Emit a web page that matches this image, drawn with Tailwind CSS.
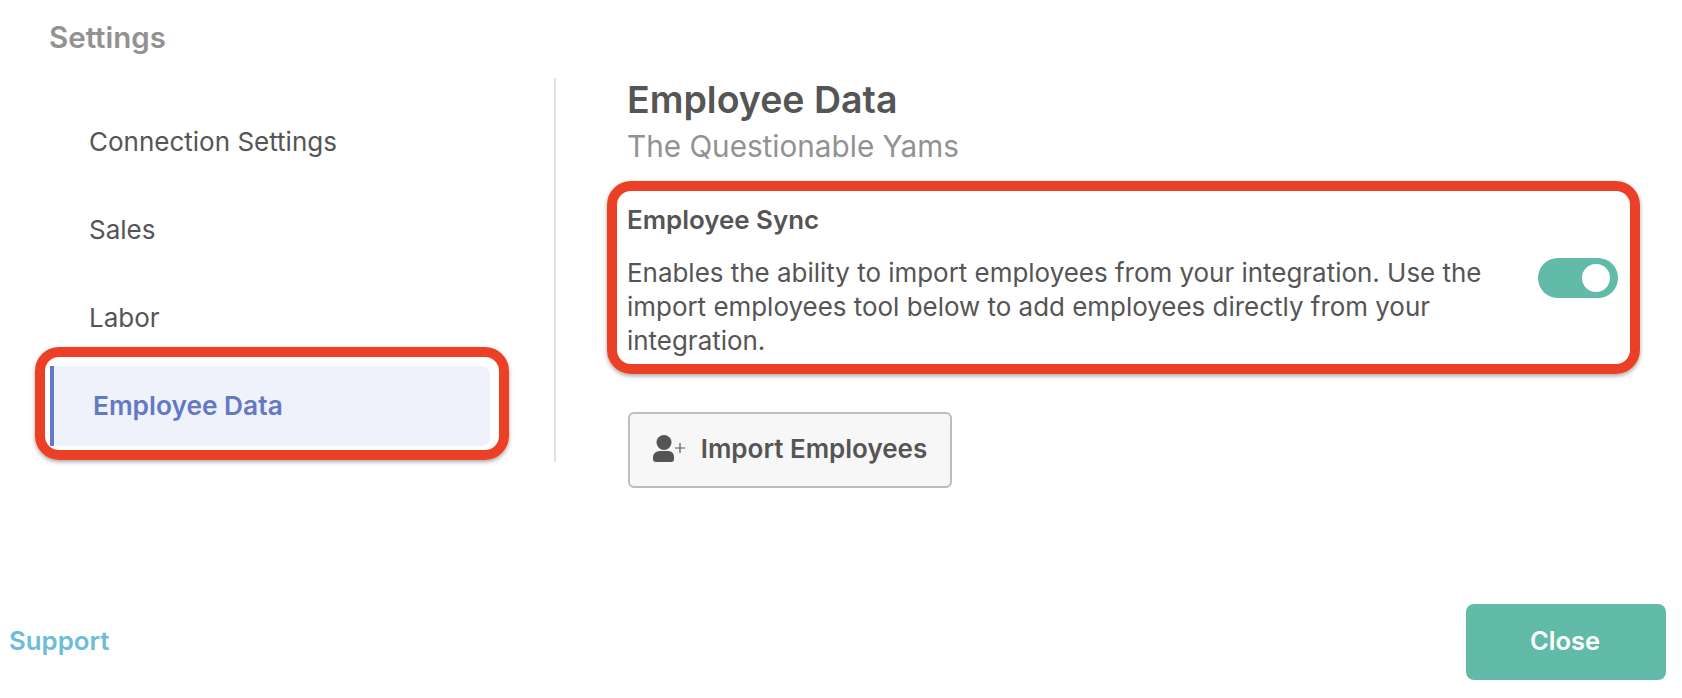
<!doctype html>
<html><head><meta charset="utf-8"><script src="https://cdn.jsdelivr.net/npm/@tailwindcss/browser@4"></script></head>
<body class="bg-white">
<div class="relative h-[698px] w-[1682px] overflow-hidden font-['Inter','Lato',sans-serif] text-[#555555]">
  <div class="pl-[49px] pt-[20px] text-[29.5px] font-semibold leading-[34px] text-[#929292]">Settings</div>
  <div class="flex pt-[24px]">
    <nav class="ml-[50px] h-[384px] w-[506px] border-r-2 border-[#e0e0e0] pt-[19px] text-[26px]">
      <div class="flex h-[88px] items-center pl-[39px]">Connection Settings</div>
      <div class="flex h-[88px] items-center pl-[39px]">Sales</div>
      <div class="flex h-[88px] items-center pl-[39px]">Labor</div>
      <div class="relative mt-[5px] flex h-[80px] w-[440px] items-center rounded-r-lg border-l-4 border-[#6478c4] bg-[#eff2fa] pb-[1px] pl-[39px] text-[26.3px] font-semibold text-[#6478c4]">
        Employee Data
        <div class="absolute -left-[19px] -top-[19px] h-[113px] w-[474px] rounded-[24px] border-[10px] border-[#ec4026] shadow-[0_2px_4px_rgba(0,0,0,0.35)]"></div>
      </div>
    </nav>
    <main class="ml-[71px] w-[991px]">
      <h1 class="text-[37.5px] font-semibold leading-[44px]">Employee Data</h1>
      <p class="text-[29.7px] leading-[48px] text-[#929292]">The Questionable Yams</p>
      <section class="relative mt-[32px] flex items-center justify-between">
        <div class="w-[880px]">
          <h2 class="text-[25.9px] font-semibold leading-[36px]">Employee Sync</h2>
          <p class="mt-[18px] text-[25.95px] leading-[34px]">Enables the ability to import employees from your integration. Use the import employees tool below to add employees directly from your integration.</p>
        </div>
        <div class="mb-[4px] flex h-[40px] w-[80px] items-center justify-end rounded-full bg-[#62bba8] pr-[8px]"><span class="h-[28px] w-[28px] rounded-full bg-white"></span></div>
        <div class="absolute -left-[20px] -top-[21px] h-[193px] w-[1033px] rounded-[24px] border-[10px] border-[#ec4026] shadow-[0_2px_4px_rgba(0,0,0,0.35)]"></div>
      </section>
      <button class="ml-px mt-[54px] flex h-[76px] w-[324px] items-center justify-center gap-[12px] rounded-md border-2 border-[#bdbdbd] bg-[#f7f7f7] pb-[3px] text-[26px] font-semibold">
        <svg class="h-[27px] w-[36px]" viewBox="0 0 36 27" fill="#555555"><circle cx="11" cy="7.5" r="7.5"/><path d="M0 22C0 18 4 16 7 16H15C18 16 21 18 21 22V24A3 3 0 0 1 18 27H3A3 3 0 0 1 0 24Z"/><path d="M27 8V18M22 13H32" stroke="#555555" stroke-width="1.2" fill="none"/></svg>
        Import Employees
      </button>
    </main>
  </div>
  <div class="absolute inset-x-0 bottom-[18px] flex items-center justify-between pl-[9px] pr-[16px]">
    <span class="-translate-y-px text-[25.8px] font-semibold text-[#6dbcd9]">Support</span>
    <button class="h-[76px] w-[200px] rounded-lg bg-[#62bba8] pb-[2px] pr-[2px] text-[25.5px] font-semibold text-white">Close</button>
  </div>
</div>
</body></html>
